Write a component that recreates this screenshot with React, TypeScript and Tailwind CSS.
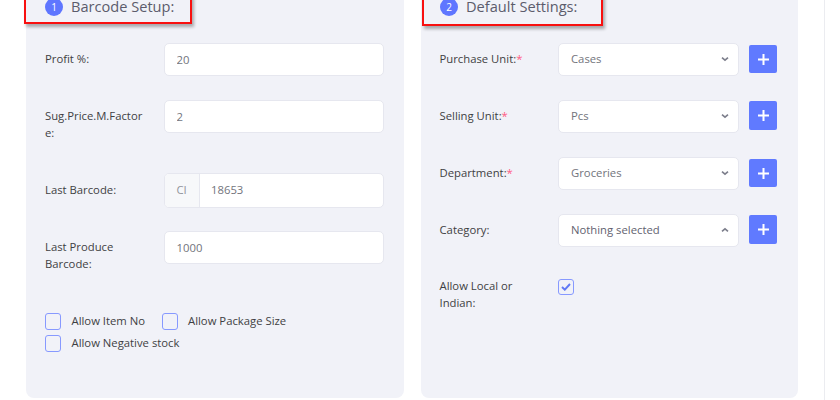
import type { ReactNode } from "react";

const field =
  "h-[33px] rounded-[5px] border border-[#e6e7ef] bg-white text-[11.3px]";

function Card({ children }: { children: ReactNode }) {
  return <section className="h-[397.5px] rounded-b-[8px] bg-[#f1f2f8] pl-[19px] text-[#3f3f43]">{children}</section>;
}

function Header({ step, title, box }: { step: number; title: string; box: string }) {
  return (
    <header className="relative flex h-[43px] items-start">
      <div className={`absolute -left-[21px] -top-[10px] border-2 border-[#f81010] shadow-[2px_3px_3px_rgba(0,0,0,0.3)] ${box}`} />
      <div className="relative -mt-[2px] flex h-[18px] w-[18px] shrink-0 items-center justify-center rounded-full bg-[#5f76ff] text-[10px] text-white">
        {step}
      </div>
      <h2 className="relative ml-2 whitespace-nowrap text-[14.6px] leading-[12px] text-[#5c5c6c]">{title}</h2>
    </header>
  );
}

function Row({ label, required, height, labelClass, children }: { label: ReactNode; required?: boolean; height: string; labelClass: string; children: ReactNode }) {
  return (
    <div className={`flex items-start ${height}`}>
      <label className={`shrink-0 whitespace-nowrap pt-[7px] text-[11.3px] leading-[17px] ${labelClass}`}>
        {label}
        {required && <span className="text-[#ff5c82]">*</span>}
      </label>
      {children}
    </div>
  );
}

function Input({ value }: { value: string }) {
  return <input className={`${field} w-[220px] px-[11.5px] text-[#72747c] outline-none`} defaultValue={value} />;
}

function Select({ value, open, offset }: { value: string; open?: boolean; offset: string }) {
  return (
    <>
      <button className={`${field} flex w-[181px] items-center justify-between pl-[12px] pr-[9px] ${open ? "text-[#62626f]" : "text-[#72747c]"}`}>
        <span className="-mt-[1px]">{value}</span>
        <svg width="8" height="6" viewBox="0 0 8 6" fill="none" stroke="#7d7f8c" strokeWidth="1.7" className={open ? "-mt-[2px]" : "-mt-[2px]"}>
          <path d={open ? "M1 4.3 4 1.9 7 4.3" : "M1 1.7 4 4.1 7 1.7"} />
        </svg>
      </button>
      <button className={`ml-[10px] flex w-[28px] items-center justify-center rounded-[2px] bg-[#607aff] ${offset}`}>
        <svg width="11" height="11" viewBox="0 0 11 11" stroke="white" strokeWidth="2">
          <path d="M5.5 0V11M0 5.5H11" />
        </svg>
      </button>
    </>
  );
}

function Check({ label, checked }: { label?: string; checked?: boolean }) {
  return (
    <label className="flex h-[22px] items-start whitespace-nowrap text-[11.3px] leading-[17px]">
      <span className="flex h-[16.5px] w-[16px] shrink-0 items-center justify-center rounded-[3px] border border-[#8799ff]">
        {checked && (
          <svg width="10" height="8" viewBox="0 0 10 8" fill="none" stroke="#6079f5" strokeWidth="1.9">
            <path d="M1 4 3.8 6.7 9 1" />
          </svg>
        )}
      </span>
      {label && <span className="ml-[10.5px] -mt-[1px]">{label}</span>}
    </label>
  );
}

export default function App() {
  return (
    <main className="flex h-[400px] w-[840px] overflow-hidden bg-white font-['Open_Sans',sans-serif]">
      <div className="grid w-[825px] shrink-0 grid-cols-[378px_377px] gap-[17px] border-r border-[#ebecf0] pl-[26px]">
        <Card>
          <Header step={1} title="Barcode Setup:" box="h-[34px] w-[168px]" />
          <Row label="Profit %:" height="h-[57px]" labelClass="w-[119px]"><Input value="20" /></Row>
          <Row label={<>Sug.Price.M.Factor<br />e:</>} height="h-[73px]" labelClass="w-[119px]"><Input value="2" /></Row>
          <Row label="Last Barcode:" height="h-[58px]" labelClass="w-[119px] mt-[1px]">
            <div className={`${field} flex h-[35px] w-[220px] items-center overflow-hidden text-[#72747c]`}>
              <span className="flex h-full w-[35px] items-center border-r border-[#e6e7ef] bg-[#f7f8fa] pl-[11.5px] text-[#92949c]">CI</span>
              <input className="w-[160px] pl-[11px] outline-none" defaultValue="18653" />
            </div>
          </Row>
          <Row label={<>Last Produce<br />Barcode:</>} height="h-[82px]" labelClass="w-[119px]"><Input value="1000" /></Row>
          <div className="grid grid-cols-[116.5px_150px]">
            <Check label="Allow Item No" />
            <Check label="Allow Package Size" />
            <Check label="Allow Negative stock" />
          </div>
        </Card>
        <Card>
          <Header step={2} title="Default Settings:" box="ml-[3px] h-[36px] w-[181px]" />
          <Row label="Purchase Unit:" required height="h-[57px]" labelClass="w-[118px] -ml-[0.5px] mr-[0.5px]"><Select value="Cases" offset="mt-[2px] h-[28px]" /></Row>
          <Row label="Selling Unit:" required height="h-[57px]" labelClass="w-[118px] -ml-[0.5px] mr-[0.5px]"><Select value="Pcs" offset="mt-[1px] h-[29px]" /></Row>
          <Row label="Department:" required height="h-[57px]" labelClass="w-[118px] -ml-[0.5px] mr-[0.5px]"><Select value="Groceries" offset="mt-[2px] h-[28px]" /></Row>
          <Row label="Category:" height="h-[57px]" labelClass="w-[118px] -ml-[0.5px] mr-[0.5px]"><Select value="Nothing selected" open offset="mt-[1px] h-[29px]" /></Row>
          <Row label={<>Allow Local or<br />Indian:</>} height="h-[40px]" labelClass="w-[118px] -ml-[0.5px] mr-[0.5px] -mt-[1px]"><div className="pt-[7.5px]"><Check checked /></div></Row>
        </Card>
      </div>
    </main>
  );
}
